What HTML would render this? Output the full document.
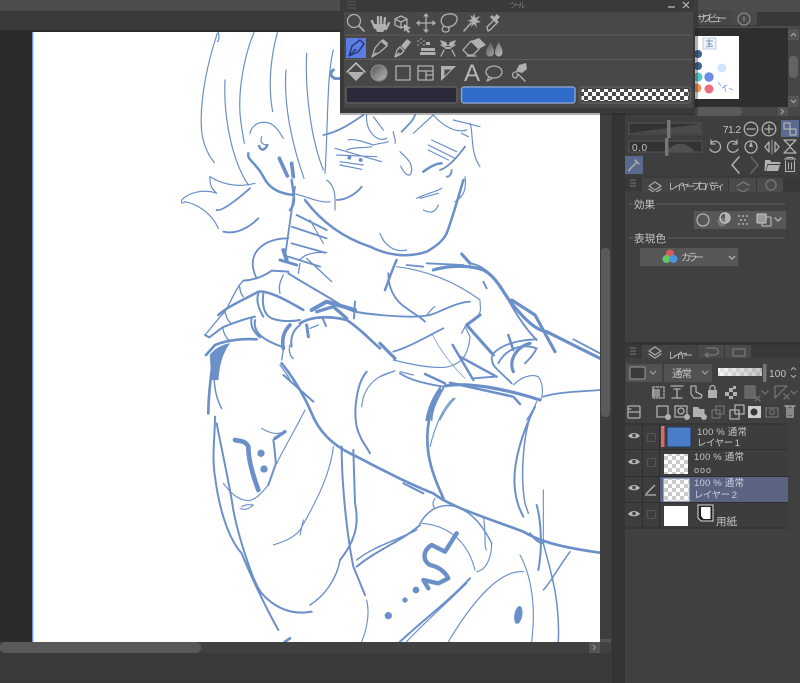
<!DOCTYPE html>
<html><head><meta charset="utf-8"><style>
html,body{margin:0;padding:0;background:#3a3a3a;width:800px;height:683px;overflow:hidden}
svg{position:absolute;left:0;top:0;display:block;filter:blur(.35px)}
text{font-family:"Liberation Sans","Noto Sans CJK JP",sans-serif;fill:#c4c4c4}
.d path{fill:none;stroke:#6b90c9;stroke-linecap:round;stroke-linejoin:round}
.i *{stroke-linecap:round;stroke-linejoin:round}
.i{fill:none;stroke:#b0b0b0;stroke-width:1.3}
.f{fill:#b0b0b0;stroke:none}
</style></head><body>
<svg width="800" height="683" viewBox="0 0 800 683" xmlns="http://www.w3.org/2000/svg">
<defs>
<pattern id="ck" width="8" height="8" patternUnits="userSpaceOnUse"><rect width="8" height="8" fill="#fff"/><rect width="4" height="4" fill="#c9c9c9"/><rect x="4" y="4" width="4" height="4" fill="#c9c9c9"/></pattern>
<pattern id="ck2" width="8" height="8" patternUnits="userSpaceOnUse"><rect width="8" height="8" fill="#fff"/><rect width="4" height="4" fill="#4a4a4a"/><rect x="4" y="4" width="4" height="4" fill="#4a4a4a"/></pattern>
<linearGradient id="op" x1="0" x2="1"><stop offset="0" stop-color="#fff"/><stop offset="1" stop-color="#aaa"/></linearGradient>
<linearGradient id="gr" x1="0" x2="1" y1="0" y2="1"><stop offset="0" stop-color="#555"/><stop offset="1" stop-color="#bbb"/></linearGradient>
</defs>

<!-- base -->
<rect width="800" height="683" fill="#3a3a3a"/>
<rect width="800" height="12" fill="#4d4d4d"/>
<rect y="11" width="800" height="1" fill="#363636"/>
<rect y="30" width="600" height="612" fill="#2b2b2b"/>
<rect x="612" y="12" width="13" height="671" fill="#343434"/>
<rect x="33" y="32" width="567" height="610" fill="#fff"/>
<rect x="32" y="32" width="1.4" height="610" fill="#6d98e0"/>

<!-- drawing -->
<svg x="33" y="32" width="567" height="610" viewBox="33 32 567 610" style="filter:none">
<g class="d" transform="translate(180,30) scale(.33333)">
<g stroke-width="3.6">
<path d="M115,8C118,20 118,30 112,35M112,10C85,90 60,200 64,290C66,340 85,375 103,398"/>
<path d="M222,8C195,70 175,170 180,250C183,290 190,320 193,340"/>
<path d="M135,150C130,260 155,390 205,465"/>
<path d="M292,8C275,70 262,160 278,245"/>
<path d="M318,120C310,220 335,340 372,445"/>
<path d="M380,70C375,170 390,320 430,420"/>
<path d="M460,60C440,140 445,270 435,430"/>
<path d="M90,440C88,470 100,480 110,490C85,480 40,480 10,505C0,515 5,525 15,515C40,520 90,540 115,595"/>
<path d="M90,440C120,460 170,475 225,460"/>
<path d="M210,310C215,285 240,270 270,280C290,290 300,310 310,325"/>
<path d="M245,320C240,335 245,345 262,345"/>
<path d="M340,490C380,500 420,520 450,515"/>
<path d="M440,450C470,470 465,510 465,540"/>
<path d="M660,365C680,385 695,395 695,420C695,440 680,445 662,408"/>
<path d="M720,505L775,490M710,505C740,490 770,485 785,475"/>
<path d="M730,540C750,550 765,550 775,525"/>
<path d="M600,610C610,640 640,670 680,660"/>
<path d="M465,355L605,395M470,375L590,380M480,395L550,405M480,405L545,418"/>
<path d="M755,330L830,365M745,345L825,385M745,360L805,390"/>
<path d="M560,255C555,300 590,340 620,325M580,260L610,300"/>
<path d="M640,305C640,320 650,330 645,340M700,310L760,255M760,255C790,290 830,310 860,300M820,270L900,290"/>
<path d="M870,280C880,300 870,370 900,410M845,310L865,320"/>
<path d="M855,440C860,480 850,500 825,515"/>
<path d="M390,570L430,640"/>
<path d="M505,330C520,325 550,335 580,345C595,340 610,340 625,335M500,360C520,350 550,355 575,350"/>
</g>
<g stroke-width="5.5">
<path d="M110,540C125,545 170,510 210,475"/>
<path d="M130,605C170,615 210,590 235,565"/>
<path d="M430,315C480,305 520,275 550,255"/>
<path d="M470,510C500,510 530,490 545,470"/>
<path d="M665,305C690,280 700,270 705,255"/>
<path d="M345,470L315,680"/>
<path d="M350,555L440,600M335,590L440,625M335,640L435,668M325,680L420,710"/>
<path d="M325,625C270,625 220,650 218,700C218,720 225,735 230,745"/>
<path d="M800,440C810,440 815,430 815,420"/>
<path d="M780,420C810,410 840,370 855,350"/>
</g>
<g stroke-width="7.500">
<path d="M205,370C200,390 230,400 250,440C265,470 290,490 340,495"/>
<path d="M237,348C245,365 255,360 262,345"/>
<path d="M375,510C420,570 480,620 570,650C620,675 680,685 740,665C775,645 790,630 800,610C815,570 830,520 850,450"/>
<path d="M730,425C750,410 770,400 785,400"/>
<path d="M335,450C340,490 350,520 330,540"/>
</g>
<path stroke-width="11" d="M298,385L322,438M335,400L340,440"/>
<path stroke-width="9" d="M460,120C445,130 455,150 480,145"/>
<circle cx="508" cy="383" r="6" fill="#6b90c9"/><circle cx="542" cy="390" r="6" fill="#6b90c9"/>
</g>

<g class="d" transform="translate(190,250) scale(.33333)">
<g stroke-width="3.400">
<path d="M610,365C560,375 520,410 515,470"/>
<path d="M430,590C420,680 370,770 330,840C310,865 280,875 250,885"/>
<path d="M340,810L330,855"/>
<path d="M830,1000C770,1060 700,1120 650,1175"/>
<path d="M1000,965C930,960 850,1050 775,1175"/>
<path d="M345,480C320,530 290,580 260,640"/>
<path d="M215,535C240,550 260,555 285,545"/>
<path d="M790,445C750,480 730,550 720,590"/>
<path d="M695,820C760,825 830,860 855,960"/>
<path d="M880,800C890,850 880,890 890,900"/>
<path d="M1060,720L1060,880"/>
<path d="M155,770C170,760 185,765 190,765C175,780 160,780 150,775"/>
<path d="M100,700C130,740 150,750 175,752C195,750 210,735 235,705"/>
<path d="M905,880C905,920 890,960 860,965"/>
<path d="M735,745C725,760 730,770 735,775"/>
<path d="M530,1050C540,1090 530,1140 515,1175"/>
<path d="M990,915C1020,970 1040,1060 1025,1175"/>
</g>
<g stroke-width="4.500">
<path d="M1060,880C1080,960 1110,1040 1105,1175"/>
<path d="M1140,905C1100,960 1080,1000 1060,1020"/>
<path d="M690,820C720,770 760,760 800,770C850,790 880,830 905,880"/>
<path d="M80,340C65,380 75,440 95,475"/>
<path d="M450,930C440,990 400,1040 360,1065"/>
<path d="M1025,490C1000,550 990,680 1005,760L1015,790"/>
<path d="M500,930C550,890 620,870 680,840"/>
</g>
<g stroke-width="6">
<path d="M75,500C75,560 65,620 75,680C85,760 110,860 155,910C175,960 220,1060 265,1140"/>
<path d="M80,520C95,600 120,710 130,780C145,860 190,1000 215,1030C260,1080 310,1095 365,1085"/>
<path d="M280,375L370,455"/>
<path d="M530,365C500,400 490,480 500,530C510,570 530,590 540,610"/>
<path d="M640,700L700,730"/>
<path d="M455,590C455,700 470,850 490,950L525,1035"/>
<path d="M490,600L495,760C510,830 490,880 450,930"/>
<path d="M500,950C560,900 640,870 690,825"/>
<path d="M840,985C780,1050 700,1110 630,1175"/>
<path d="M1035,470C1000,540 965,640 975,720C980,760 990,780 1000,800"/>
<path d="M1040,765C1050,800 1060,880 1045,960"/>
<path d="M1020,850C1035,870 1050,880 1060,880"/>
<path d="M250,570C255,600 255,620 258,640L235,705"/>
</g>
<g stroke-width="8">
<path d="M275,340C300,370 340,430 365,490C385,540 420,580 480,610C560,650 650,700 730,730C780,770 880,800 1000,845C1040,870 1100,890 1230,908"/>
<path d="M70,320C65,370 55,420 55,490"/>
<path d="M750,420C720,470 705,540 715,610C725,670 745,710 760,745"/>
</g>
<path stroke-width="14" d="M135,570C150,575 165,570 175,590C175,630 190,680 205,720"/>
<path stroke-width="10" d="M255,565L285,545"/>
<path stroke-width="13" d="M800,850L765,905L725,885C700,900 695,930 720,945C745,950 765,965 775,985L745,1000L700,990L715,1015"/>
<path stroke-width="8" d="M285,1175L300,1165"/>
<g fill="#6b90c9">
<circle cx="213" cy="610" r="11"/><circle cx="222" cy="657" r="11"/>
<circle cx="678" cy="1020" r="10"/><circle cx="645" cy="1050" r="8"/><circle cx="595" cy="1097" r="11"/>
<ellipse cx="985" cy="1095" rx="12" ry="27" transform="rotate(10 985 1095)"/>
</g>
</g>

<!-- hand detail -->
<g class="d" transform="translate(200,250) scale(.33333)">
<g stroke-width="4">
<path d="M15,255C40,225 55,205 75,185C90,160 110,110 130,92"/>
<path d="M118,105C120,125 125,135 130,140"/>
<path d="M75,185C80,205 85,215 95,222"/>
<path d="M250,75C240,95 235,110 240,130"/>
<path d="M68,232C70,250 80,265 90,275"/>
<path d="M320,25L395,95M300,40L295,70"/>
<path d="M240,345C255,365 265,380 270,390M250,300L245,330"/>
<path d="M270,285C265,300 270,320 280,325"/>
<path d="M330,235L355,225"/>
<path d="M300,28C320,10 350,5 380,8"/>
</g>
<g stroke-width="6">
<path d="M130,92C160,90 190,80 215,62L265,65"/>
<path d="M265,70C310,100 370,130 430,170C460,190 500,190 540,195"/>
<path d="M175,130C165,160 185,190 190,200"/>
<path d="M190,130C185,170 195,195 215,205C240,215 275,215 300,210"/>
<path d="M15,255L28,262L68,232C110,215 140,205 165,200"/>
<path d="M155,205C150,225 160,245 180,262"/>
<path d="M165,210C160,240 175,265 245,290"/>
<path d="M300,225C280,240 270,260 275,290"/>
<path d="M465,155L462,205"/>
<path d="M368,205L378,228"/>
</g>
<path stroke-width="7.500" d="M55,195C90,165 130,150 175,125C200,120 250,145 310,180"/>
<path stroke-width="8" d="M18,315L45,285C80,270 130,265 170,268"/>
<path stroke-width="9" d="M240,30L290,45M320,225L325,260"/>
<path stroke-width="12" d="M250,0L260,30"/>
<path stroke-width="11" d="M270,225C250,245 245,270 250,295"/>
<path stroke-width="8" d="M300,220C340,195 400,200 440,210C480,235 510,270 540,295"/>
<path stroke-width="12" d="M335,180L380,155L465,180"/>
<path stroke-width="10" d="M350,185L400,170L440,205"/>
<path fill="#6b90c9" style="fill:#6b90c9" d="M30,315C40,300 60,285 90,280C70,305 58,340 55,390L35,390Z"/>
</g>

<!-- knot / shoulder detail -->
<g class="d" transform="translate(380,250) scale(.33333)">
<g stroke-width="3.500">
<path d="M50,50C130,60 220,90 300,150"/>
<path d="M300,150C300,170 305,185 295,195"/>
<path d="M165,170C155,175 150,185 140,195"/>
<path d="M40,330C80,340 150,355 195,352C240,345 265,320 270,260L255,230"/>
<path d="M0,380L45,362M60,365L100,375"/>
<path d="M400,405C420,385 450,370 475,380C490,400 490,430 482,450"/>
<path d="M225,445C205,465 190,490 180,510"/>
<path d="M470,455C460,480 450,495 440,510"/>
<path d="M245,250L260,220"/>
</g>
<path stroke-width="2" d="M155,250C185,310 220,350 255,385"/>
<g stroke-width="5.500">
<path d="M25,70C25,110 40,150 80,175C100,190 120,200 135,215"/>
<path d="M80,45L130,50"/>
<path d="M140,40L250,45"/>
<path d="M310,95L320,115"/>
<path d="M0,195C60,200 130,205 165,190C200,175 240,155 270,155"/>
<path d="M40,305C90,290 140,260 190,235"/>
<path d="M580,268L660,310"/>
<path d="M340,310C370,280 420,270 470,268"/>
<path d="M355,340C370,310 410,275 470,295C460,315 450,325 435,340"/>
<path d="M490,440C540,425 600,425 660,420"/>
<path d="M190,415C170,450 155,480 155,510"/>
<path d="M270,40C310,45 360,90 385,150C410,195 440,240 470,270"/>
<path d="M60,370C90,390 130,400 190,410"/>
<path d="M280,385L345,380"/>
<path d="M335,320C335,350 345,350 395,400"/>
</g>
<g stroke-width="7.500">
<path d="M50,30C40,50 30,80 15,120"/>
<path d="M218,285L280,390"/>
<path d="M240,320L350,380"/>
<path d="M135,372L195,400"/>
<path d="M385,255L400,300"/>
<path d="M180,415C155,450 145,480 140,510"/>
<path d="M210,398L400,440L420,462"/>
</g>
<g stroke-width="9.500">
<path d="M160,60C210,45 270,45 310,60C350,80 370,130 395,160C420,190 460,240 500,245L660,325"/>
<path d="M245,12L270,40"/>
<path d="M395,150L465,195L525,305"/>
<path d="M300,195L260,225L340,315"/>
<path d="M0,280L45,325"/>
<path d="M195,408C260,395 370,415 480,450"/>
<path d="M400,365C385,330 410,290 450,280"/>
</g>
</g>
</svg>

<!-- canvas scrollbars -->
<rect x="600" y="30" width="11" height="623" fill="#3e3e3e"/>
<rect x="601" y="248" width="9" height="169" rx="4" fill="#5a5a5a"/>
<rect x="600" y="639" width="11" height="13" fill="#555"/>
<path d="M603,644l2.5,2.5l2.5,-2.5" fill="none" stroke="#999"/>
<rect x="0" y="642" width="611" height="11" fill="#414141"/>
<rect x="0" y="642" width="201" height="11" rx="5" fill="#595959"/>
<rect x="589" y="642" width="11" height="11" fill="#555"/>
<path d="M593,645l2.5,2.5l-2.5,2.5" fill="none" stroke="#999"/>

<!-- right panel base -->
<rect x="625" y="0" width="175" height="683" fill="#404040"/>
<rect x="625" y="0" width="175" height="12" fill="#4d4d4d"/>
<rect x="625" y="12" width="175" height="14" fill="#383838"/>
<rect x="625" y="26" width="175" height="2" fill="#4a4a4a"/>
<!-- subview -->
<rect x="695" y="10" width="36" height="15" fill="#474747"/>
<text x="697" y="22" font-size="9.5" textLength="30">サブビュー</text>
<rect x="731" y="10" width="26" height="15" fill="#4a4a4a"/>
<g class="i" style="stroke:#888"><circle cx="744" cy="19" r="6"/><path d="M744,17v4"/></g>
<rect x="695" y="28" width="93" height="79" fill="#2e2e2e"/>
<rect x="695" y="36" width="44" height="63" fill="#fff"/>
<rect x="703" y="38" width="13" height="11" fill="#eef3fa" stroke="#a9bbd8" stroke-width=".7"/>
<path d="M706,41h7M707,44h5M706,47l7,-1M709,39v8" stroke="#5f82bb" fill="none" stroke-width=".8"/>
<circle cx="698" cy="54" r="4" fill="#3d6187"/><circle cx="698" cy="66" r="4" fill="#3a648e"/>
<circle cx="698" cy="77" r="4.5" fill="#58c4c4"/><circle cx="697" cy="88" r="4.5" fill="#ee9162"/>
<circle cx="709" cy="77" r="4.7" fill="#6e8ee6"/><circle cx="709" cy="89" r="4.5" fill="#ee6b80"/>
<circle cx="722" cy="68" r="4.5" fill="#cfe6fb"/>
<path d="M718,82l3,4M722,88l5,-3M724,85l2,7M729,88l4,2" stroke="#7f9fe0" fill="none" stroke-width=".8"/>
<rect x="788" y="28" width="12" height="88" fill="#474747"/>
<rect x="789" y="56" width="9" height="22" rx="4" fill="#636363"/>
<rect x="788" y="29" width="11" height="11" fill="#555"/><path d="M791,36l2.5,-2.5l2.5,2.5" fill="none" stroke="#aaa"/>
<rect x="788" y="96" width="11" height="11" fill="#555"/><path d="M791,100l2.5,2.5l2.5,-2.5" fill="none" stroke="#aaa"/>
<rect x="695" y="107" width="105" height="9" fill="#474747"/>
<rect x="695" y="107" width="47" height="9" rx="4" fill="#5a5a5a"/>
<rect x="778" y="107" width="10" height="9" fill="#555"/><path d="M781,109l2.5,2.5l-2.5,2.5" fill="none" stroke="#aaa"/>

<!-- nav controls -->
<rect x="625" y="116" width="175" height="59" fill="#3e3e3e"/>
<rect x="629" y="123" width="72" height="11" fill="#333" stroke="#555"/>
<path d="M630,133L700,124V133Z" fill="#4a4a4a"/>
<rect x="667" y="120" width="3.5" height="18" fill="#767676"/>
<text x="723" y="133" font-size="10" textLength="18">71.2</text>
<g class="i"><circle cx="751" cy="129" r="6.8"/><path d="M747,129h8"/><circle cx="769" cy="129" r="6.8"/><path d="M765,129h8M769,125v8"/></g>
<rect x="781" y="120" width="18" height="17" fill="#5a6a8e"/>
<g class="i"><rect x="784" y="123" width="6" height="6"/><rect x="790" y="129" width="6" height="6"/></g>
<rect x="629" y="141" width="73" height="11" fill="#333" stroke="#555"/>
<path d="M665,152C675,142 685,140 695,152Z" fill="#505050"/>
<text x="632" y="151" font-size="10" textLength="15">0.0</text>
<rect x="665" y="138" width="3.5" height="18" fill="#767676"/>
<g class="i">
<path d="M711,143A5.5,5.5 0 1 1 710,149M711,140v4h4"/>
<path d="M737,143A5.5,5.5 0 1 0 738,149M737,140v4h-4"/>
<circle cx="751" cy="147" r="6"/><path class="f" d="M751,141l2,6h-4Z"/>
<path d="M769,142v10l-4,-5ZM775,142v10l4,-5Z"/><path d="M772,140v14" stroke="#888"/>
<path d="M784,140h12l-6,6ZM784,153h12l-6,-6Z"/>
</g>
<rect x="625" y="156" width="18" height="18" fill="#5a6a8e"/>
<g class="i"><path d="M629,170l8,-8M635,160l4,4M630,169l-1,2"/></g>
<g class="i" style="stroke-width:1.600"><path d="M739,157l-7,8l7,8"/><path d="M751,157l7,8l-7,8" stroke="#666"/></g>
<g class="f"><path d="M765,160h5l1.500,2h9v2h-13l-2,7h-1ZM768,165h12l-2,6h-12Z"/></g>
<path d="M784,159h12M787,159v-1.500h6V159M785.500,160.500v11h9v-11M788.500,162.500v7M791.500,162.500v7" fill="none" stroke="#b4b4b4" stroke-width="1"/>

<!-- layer property panel -->
<rect x="625" y="175" width="175" height="3" fill="#3b3b3b"/>
<rect x="625" y="178" width="17" height="13" fill="#383838"/>
<rect x="642" y="178" width="158" height="14" fill="#383838"/>
<path d="M630,180h6M630,183h6M630,186h6" stroke="#777"/>
<rect x="642" y="178" width="86" height="15" fill="#444"/>
<rect x="729" y="178" width="27" height="14" fill="#4a4a4a"/>
<rect x="757" y="178" width="26" height="14" fill="#4a4a4a"/>
<g class="i" style="stroke:#a8a8a8"><path d="M649,186l6,-4l6,4l-6,4ZM649,189l6,4l6,-4"/></g>
<text x="668" y="190" font-size="9.500" textLength="57">レイヤープロパティ</text>
<g class="i" style="stroke:#777"><path d="M737,186l6,-4l6,3M738,189l5,3l5,-3"/><circle cx="771" cy="185" r="5"/></g>
<rect x="625" y="192" width="175" height="150" fill="#404040"/>
<path d="M629,204h4M656,204h129M629,238h4M668,238h117" stroke="#5c5c5c"/>
<text x="634" y="208" font-size="10.500" textLength="21">効果</text>
<text x="634" y="242" font-size="10.500" textLength="32">表現色</text>
<rect x="694" y="211" width="92" height="18" fill="#575757"/>
<g class="i"><circle cx="703" cy="220" r="6"/><circle cx="722" cy="222" r="4.500" stroke="none" fill="#777"/><circle cx="725" cy="218" r="5" stroke="#ccc"/><path d="M725,213a5,5 0 0 1 0,10z" class="f"/>
<g class="f"><circle cx="739" cy="216" r="1"/><circle cx="743" cy="216" r="1"/><circle cx="747" cy="216" r="1"/><circle cx="741" cy="220" r="1"/><circle cx="745" cy="220" r="1"/><circle cx="739" cy="224" r="1"/><circle cx="743" cy="224" r="1"/><circle cx="747" cy="224" r="1"/></g>
<rect x="762" y="217" width="9" height="9" rx="1"/><rect x="757" y="214" width="9" height="9" rx="1" fill="#999" stroke="#bbb"/>
<path d="M775,218l3,3l3,-3"/></g>
<rect x="640" y="248" width="98" height="18" fill="#575757"/>
<circle cx="670" cy="253.500" r="4" fill="#d85a5a"/><circle cx="666.500" cy="259" r="4" fill="#62c95f"/><circle cx="673.500" cy="259" r="4" fill="#4c94e4"/>
<text x="681" y="261" font-size="10" textLength="23">カラー</text>
<path d="M729,256l3,3l3,-3" fill="none" stroke="#bbb" stroke-width="1.200"/>
<rect x="625" y="342" width="175" height="3" fill="#333"/>

<!-- layer panel -->
<rect x="625" y="345" width="175" height="13" fill="#383838"/>
<path d="M630,348h6M630,351h6M630,354h6" stroke="#777"/>
<rect x="642" y="345" width="55" height="14" fill="#444"/>
<rect x="698" y="345" width="26" height="13" fill="#4a4a4a"/>
<rect x="725" y="345" width="26" height="13" fill="#4a4a4a"/>
<g class="i" style="stroke:#aaa"><path d="M649,351l6,-4l6,4l-6,4ZM649,354l6,4l6,-4"/></g>
<text x="668" y="359" font-size="9.500" textLength="25">レイヤー</text>
<g class="i" style="stroke:#777"><path d="M706,348h9a3,3 0 0 1 0,7h-8M708,353l-3,2l3,2"/><path d="M733,349h12v7h-12Z"/></g>
<rect x="625" y="359" width="175" height="65" fill="#404040"/>
<rect x="626" y="364" width="36" height="18" fill="#525252"/>
<rect x="630" y="367" width="15" height="12" rx="1" fill="#3a3a3a" stroke="#9a9a9a"/>
<path d="M650,371l3,3l3,-3" fill="none" stroke="#aaa"/>
<rect x="664" y="364" width="48" height="18" fill="#525252"/>
<text x="672" y="377" font-size="10.500" textLength="20">通常</text>
<path d="M702,371l3,3l3,-3" fill="none" stroke="#aaa"/>
<rect x="718" y="368" width="44" height="8" fill="url(#ck)" opacity=".9"/>
<rect x="718" y="368" width="44" height="8" fill="url(#op)" opacity=".55"/>
<rect x="763" y="364" width="3.500" height="18" fill="#777"/>
<text x="769" y="377" font-size="10" textLength="17">100</text>
<path d="M791,370l2.500,-2.500l2.500,2.500M791,375l2.500,2.500l2.500,-2.500" fill="none" stroke="#aaa"/>
<!-- layer icons row 1 -->
<g class="i">
<rect x="653" y="387" width="11" height="11" stroke-dasharray="2 1.500"/><rect x="652" y="389" width="8" height="8" class="f" opacity=".7"/>
<path d="M671,386h12M674,389h6M677,389v9M672,398h10"/>
<path d="M691,386h5v6l6,3l-1,3h-7l-3,-4Z"/>
<rect x="708" y="390" width="9" height="8" class="f"/><path d="M710,390v-2a2.500,2.500 0 0 1 5,0v2"/>
<g class="f"><rect x="725" y="392" width="4" height="4"/><rect x="729" y="388" width="4" height="4"/><rect x="733" y="392" width="4" height="4"/><rect x="729" y="396" width="4" height="3"/><rect x="733" y="386" width="3" height="3"/></g>
<g stroke="#707070"><rect x="745" y="386" width="10" height="12" fill="#666"/><path d="M755,396l5,5M760,396l-5,5M762,391l3,3l3,-3"/>
<path d="M775,386l12,0l-12,12Z"/><path d="M784,394l5,5M789,394l-5,5M791,391l3,3l3,-3"/></g>
</g>
<!-- layer icons row 2 -->
<g class="i">
<rect x="628" y="406" width="12" height="12" rx="1"/><path d="M628,412h12M628,409h3"/>
<rect x="657" y="406" width="11" height="11"/><circle cx="668" cy="417" r="3" class="f"/>
<rect x="675" y="406" width="12" height="11"/><circle cx="681" cy="411" r="3"/><circle cx="687" cy="417" r="3" class="f"/>
<path class="f" d="M693,407h5l1.500,2h5v8h-11.500Z"/><circle cx="704" cy="417" r="3" class="f"/>
<g stroke="#707070"><rect x="716" y="406" width="8" height="8"/><rect x="712" y="410" width="8" height="8"/></g>
<rect x="735" y="405" width="9" height="9"/><rect x="730" y="410" width="9" height="9"/>
<rect x="748" y="406" width="13" height="12" class="f" style="fill:#ccc"/><circle cx="754" cy="412" r="3.500" fill="#333" stroke="none"/>
<g stroke="#707070"><rect x="766" y="408" width="12" height="9"/><circle cx="772" cy="412" r="2.500"/></g>
<path d="M785,406h10M787,406v11h6v-11M789,408v7M791,408v7"/>
</g>
<!-- layer list -->
<rect x="625" y="424" width="163" height="104" fill="#3d3d3d"/>
<rect x="659" y="477" width="129" height="25.500" fill="#5a6482"/>
<path d="M625,424h163M625,449.500h163M625,476.500h163M625,502.500h163M625,528h163" stroke="#2e2e2e"/>
<path d="M642.500,424v104M659.500,424v104" stroke="#2e2e2e"/>
<g>
<path d="M628,436c3,-4 9,-4 12,0c-3,3 -9,3 -12,0Z" fill="#b8b8b8"/><circle cx="634" cy="435.500" r="1.800" fill="#444"/>
<path d="M628,462c3,-4 9,-4 12,0c-3,3 -9,3 -12,0Z" fill="#b8b8b8"/><circle cx="634" cy="461.500" r="1.800" fill="#444"/>
<path d="M628,488c3,-4 9,-4 12,0c-3,3 -9,3 -12,0Z" fill="#b8b8b8"/><circle cx="634" cy="487.500" r="1.800" fill="#444"/>
<path d="M628,514c3,-4 9,-4 12,0c-3,3 -9,3 -12,0Z" fill="#b8b8b8"/><circle cx="634" cy="513.500" r="1.800" fill="#444"/>
</g>
<g fill="none" stroke="#555"><rect x="647.500" y="433.500" width="8" height="8" rx="1"/><rect x="647.500" y="458.500" width="8" height="8" rx="1"/><rect x="647.500" y="510.500" width="8" height="8" rx="1"/></g>
<path d="M646,494l9,-9M645,495h11" fill="none" stroke="#b4b4b4" stroke-width="1.300"/>
<rect x="661" y="426" width="3.500" height="21" fill="#d96b6b"/>
<rect x="667" y="427" width="24" height="20" fill="#4a7cc8" stroke="#223a5c"/>
<text x="697" y="435" font-size="9.500" textLength="50">100 % 通常</text>
<text x="697" y="446" font-size="9.500" textLength="43">レイヤー 1</text>
<rect x="664" y="454" width="24" height="20" fill="url(#ck)"/>
<text x="694" y="460" font-size="9.500" textLength="50">100 % 通常</text>
<text x="694" y="473" font-size="9" textLength="17">ooo</text>
<rect x="664" y="479" width="25" height="22" fill="url(#ck)" stroke="#d8dee8"/>
<text x="694" y="486" font-size="9.500" textLength="50" style="fill:#c8cedc">100 % 通常</text>
<text x="694" y="498" font-size="9.500" textLength="43" style="fill:#c8cedc">レイヤー 2</text>
<rect x="664" y="506" width="24" height="20" fill="#fff"/>
<path d="M698,505h15v16h-12l-3,-3Z" fill="#222" stroke="#ddd"/>
<path d="M701,507h9.500v12h-7l-2.500,-3Z" fill="#fff"/>
<text x="716" y="525" font-size="10.500" textLength="21">用紙</text>

<!-- Tool window -->
<rect x="340" y="0" width="358" height="115" fill="#222" opacity=".35"/>
<rect x="340" y="0" width="355" height="113" fill="#3a3a3a"/>
<path d="M347,2h9M347,5h9M347,8h9" stroke="#555"/>
<text x="509" y="8" font-size="8" textLength="17" style="fill:#777">ツール</text>
<path d="M668,7h7M683,2l6,6M689,2l-6,6" stroke="#bbb" stroke-width="1.200" fill="none"/>
<rect x="344" y="12" width="349" height="96" fill="#484848"/>
<path d="M345,35h347M345,59.500h347" stroke="#5e5e5e"/>
<rect x="346" y="38" width="20" height="20" fill="#5b7de6"/>
<!-- row 1 -->
<g class="i">
<circle cx="354" cy="21" r="6.500"/><path d="M359,26l5,5" stroke-width="1.600"/>
<g stroke-width="2.300"><path d="M375,28l-3,-7M378,27v-10M381,27v-10M384,27l1,-9M386,29l3,-6"/></g><path class="f" d="M374,24h12v4l-3,4h-6Z"/>
<path d="M395,19l6,-3l6,3v6l-6,3l-6,-3ZM395,19l6,3l6,-3M401,22v6"/><path class="f" d="M404,24l7,4l-3,1l2,3l-2,1l-2,-3l-2,2Z"/>
<path d="M426,15v16M418,23h16"/><path class="f" d="M426,13l3,3.500h-6ZM426,33l3,-3.500h-6ZM416,23l3.500,-3v6ZM436,23l-3.500,-3v6Z"/>
<path d="M444,26c-5,-4 -3,-11 4,-12c6,-1 10,2 9,6c-1,5 -8,9 -13,6M444,26c-3,3 -2,6 2,6c3,0 4,-3 2,-5"/>
<path d="M464,31l7,-8" stroke-width="1.500"/><path class="f" d="M474,13l1.300,5l4.700,-2l-3,4l4,2l-5,1l1,5l-3,-4l-3,3l1,-5l-4.500,-1l4.500,-2l-2,-4l3,2Z"/>
<path d="M488,31l2,-1l8,-8l-3,-3l-8,8Z"/><path class="f" d="M494,17l3,-3l3,3l-3,3l1,1l-2,2l-6,-6l2,-2Z"/>
</g>
<!-- row 2 -->
<g class="i">
<path style="stroke:#2c3a70" stroke-width="1.500" d="M349,56l3,-10l8,-6l4,4l-6,8ZM349,56l5,-5"/><circle cx="355" cy="50" r="1.200" fill="#2c3a70" stroke="none"/>
<path d="M372,57l3,-9l6,-7l6,5l-7,6ZM372,57l4,-4"/><path class="f" d="M381,41l2,-2l5,4l-1,3Z"/>
<path d="M395,57l2,-7l3,-3l4,4l-3,3ZM395,57l4,-4"/><path class="f" d="M401,46l6,-7l4,3l-6,8Z"/>
<g class="f"><circle cx="418" cy="41" r=".8"/><circle cx="418" cy="45" r=".8"/><circle cx="421" cy="43" r=".8"/><circle cx="421" cy="39" r=".8"/><circle cx="424" cy="41" r=".8"/><circle cx="424" cy="45" r=".8"/><path d="M426,42h4v3h-4ZM421,48h14v3h-14Z"/><path d="M420,52h15.500v3h-15.500Z"/></g>
<g class="f"><path d="M440,40l6,2l2,4l-5,1ZM456,40l-6,2l-2,4l5,1Z"/><path d="M446,47h4l1,2h-6Z"/></g><path d="M444,50l-3,6M452,50l3,6M441,45l5,3M455,45l-5,3"/>
<path class="f" d="M471,41l8,-3l7,7l-7,4Z"/><path d="M463,50l8,-9l8,8l-6,6h-5ZM467,56h9"/>
<path fill="url(#gr)" stroke="none" d="M486,52c0,-3 3,-6 4,-10c2,3 4,7 4,10c0,6 -8,6 -8,0ZM495,52c0,-3 2,-6 3.500,-10c2,3 4,7 4,10c0,6 -7.500,6 -7.500,0Z"/>
</g>
<!-- row 3 -->
<g class="i">
<path class="f" d="M348,73l8,-8l8,8l-8,8Z"/><path d="M347,72l9,-9l9,9" style="stroke:#d0d0d0"/><path d="M349,72h14l-7,-7Z" fill="#484848" stroke="none"/>
<circle cx="379" cy="73" r="8" fill="url(#gr)" stroke="#888"/>
<rect x="396" y="66" width="14" height="14"/>
<rect x="418" y="66" width="15" height="14"/><path d="M418,71h15M426,71v9M426,75h7"/>
<path class="f" d="M441,81v-15h15Z"/><path d="M444.500,76v-6.500h6.500Z" fill="#484848" stroke="none"/>
<text x="464" y="81" font-size="24" textLength="16" style="fill:#b8b8b8;stroke:none">A</text>
<ellipse cx="494" cy="72" rx="8" ry="6"/><path d="M489,77l-2,4l5,-2.500"/>
<path class="f" d="M516,71l3,-6l7,-2l1,6l-5,4Z"/><path d="M517,72c-5,-1 -6,5 -2,6c2,0 3,-2 2,-4M518,74l7,7"/>
</g>
<!-- color boxes -->
<rect x="346" y="87" width="111" height="16" rx="2.500" fill="#2b2b3b" stroke="#5e5e5e" stroke-width="1.500"/>
<rect x="461.500" y="87" width="113.500" height="16" rx="2.500" fill="#2f6ccb" stroke="#86a0cc" stroke-width="1.500"/>
<rect x="579.500" y="87" width="111" height="16" rx="2.500" fill="#444" stroke="#5e5e5e" stroke-width="1.500"/>
<rect x="581.500" y="89" width="107" height="12" rx="2" fill="url(#ck2)"/>
</svg>
</body></html>
